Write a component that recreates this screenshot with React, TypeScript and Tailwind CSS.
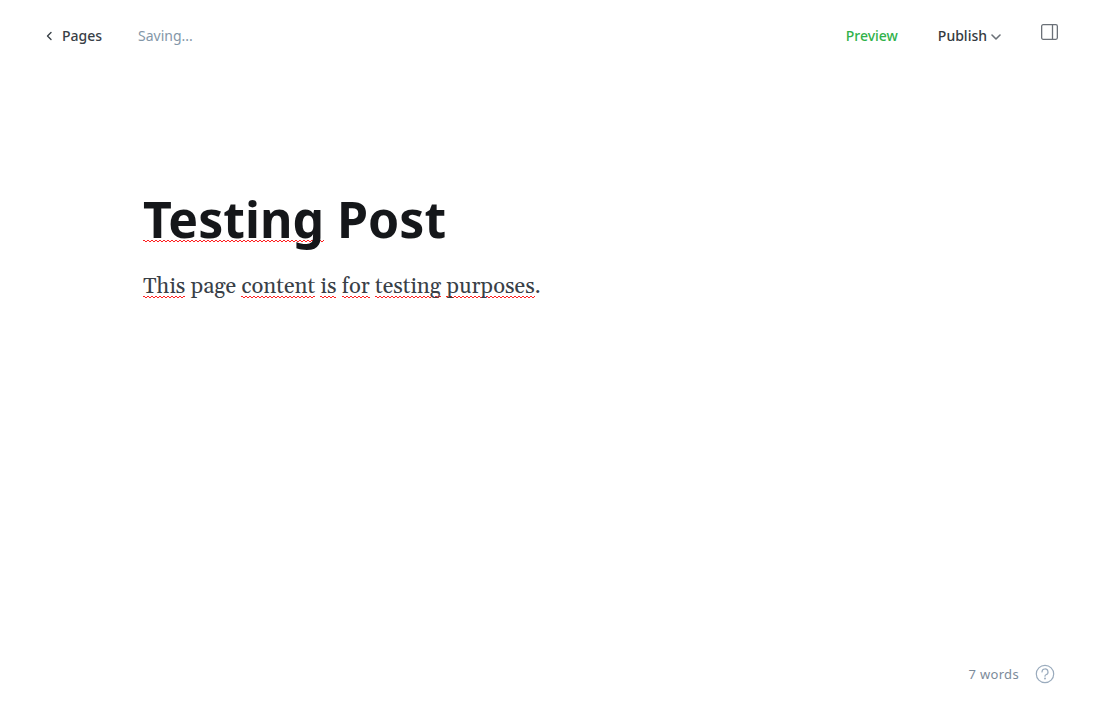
import type { ReactNode } from "react";
import { clsx } from "clsx";

const zigzag =
  "bg-[image:linear-gradient(90deg,#ff2020_50%,transparent_50%),linear-gradient(90deg,transparent_50%,#ff2020_50%)] bg-[length:4px_1px,4px_1px] bg-repeat-x";

function Misspelled({ children, large = false }: { children: ReactNode; large?: boolean }) {
  return (
    <span
      className={clsx(
        zigzag,
        large
          ? "bg-[position:left_bottom_12px,left_bottom_11px]"
          : "bg-[position:left_bottom_4px,left_bottom_3px]",
      )}
    >
      {children}
    </span>
  );
}

export default function App() {
  return (
    <div className="flex min-h-screen flex-col bg-white font-['Noto_Sans',sans-serif] text-[#15171a]">
      <header className="flex items-center justify-between py-6 pr-[42px] pl-11 text-sm leading-6">
        <div className="flex items-center gap-9">
          <a href="#pages" className="flex items-center gap-2 font-medium text-[#394047]">
            <svg className="size-2.5" viewBox="0 0 10 10" fill="none" stroke="currentColor" strokeWidth="1.4" strokeLinecap="round" strokeLinejoin="round">
              <path d="M7 1.5 3.5 5 7 8.5" />
            </svg>
            Pages
          </a>
          <span className="text-[#8397a8]">Saving...</span>
        </div>
        <div className="flex items-center gap-10 font-medium">
          <button type="button" className="text-[#30b24a]">Preview</button>
          <button type="button" className="flex items-center gap-1 text-[#343a40]">
            Publish
            <svg className="mt-0.5 size-2.5" viewBox="0 0 10 10" fill="none" stroke="#6b7178" strokeWidth="1.6" strokeLinecap="round" strokeLinejoin="round">
              <path d="M1 3l4 4 4-4" />
            </svg>
          </button>
          <button type="button" aria-label="Settings" className="-mt-2 text-[#6b7178]">
            <svg className="h-4 w-[17px]" viewBox="0 0 17 16" fill="none" stroke="currentColor" strokeWidth="1.3">
              <rect x=".65" y=".65" width="15.7" height="14.7" rx="1.5" />
              <path d="M11.5.5v15" />
            </svg>
          </button>
        </div>
      </header>
      <main className="flex-1 px-[143px] pt-[115px]">
        <h1 className="text-[50px] leading-[64px] font-bold">
          <Misspelled large>Testing</Misspelled> Post
        </h1>
        <p className="mt-[18px] font-['Gelasio','Georgia','Liberation_Serif',serif] text-[22px] leading-9 text-[#394047]">
          <Misspelled>This</Misspelled> page <Misspelled>content</Misspelled> <Misspelled>is</Misspelled>{" "}
          <Misspelled>for</Misspelled> <Misspelled>testing</Misspelled> <Misspelled>purposes</Misspelled>.
        </p>
      </main>
      <footer className="flex items-center justify-end gap-4 px-[45px] pb-10 text-[13px] leading-6 text-[#7c8b9a]">
        <span className="tracking-wide">7 words</span>
        <a href="#help" aria-label="Help">
          <svg className="size-5" viewBox="0 0 20 20" fill="none" stroke="#9aabbd" strokeWidth="1.2" strokeLinecap="round" strokeLinejoin="round">
            <circle cx="10" cy="10" r="8.7" />
            <path d="M7 8a3 3 0 1 1 4 2.8c-.7.3-1 .6-1 1.4" />
            <circle cx="10" cy="14.5" r=".4" fill="#9aabbd" />
          </svg>
        </a>
      </footer>
    </div>
  );
}
